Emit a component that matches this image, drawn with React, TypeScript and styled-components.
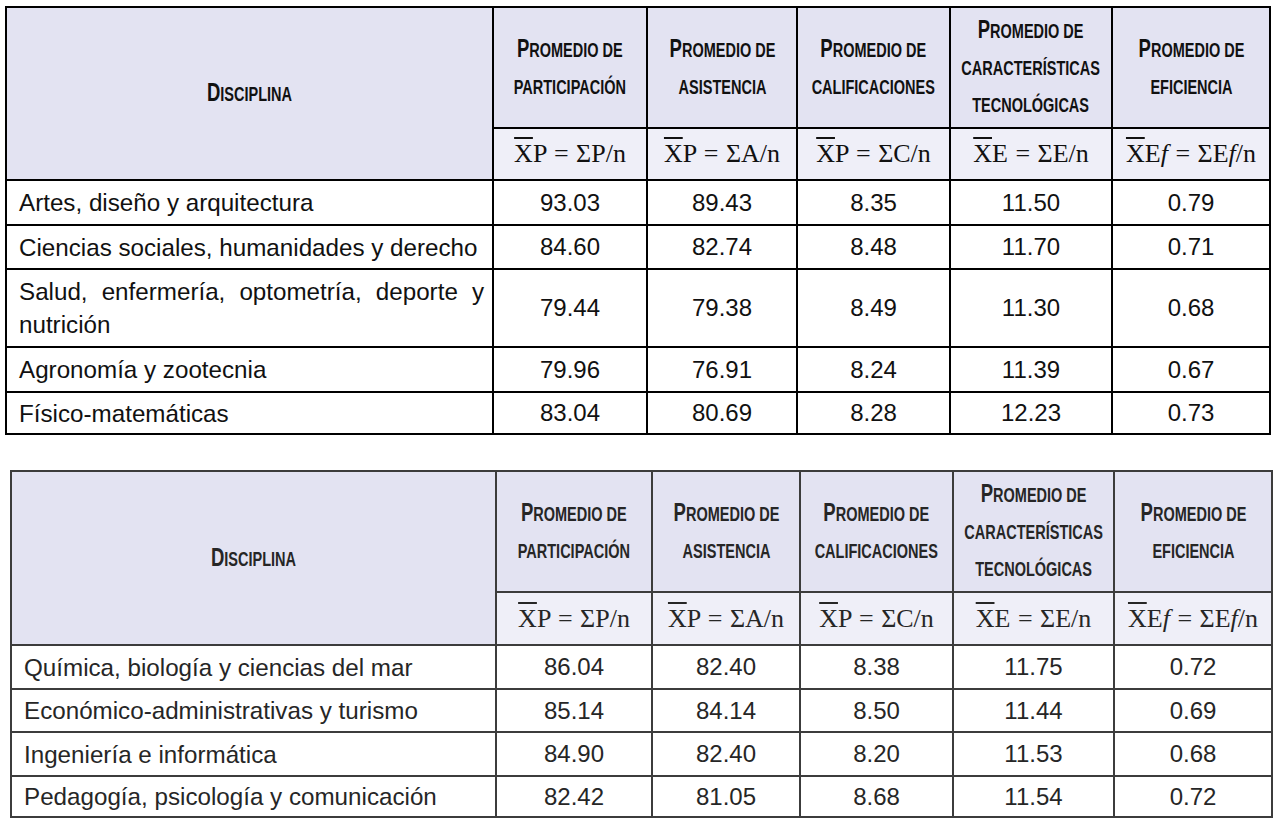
import * as React from 'react';
import styled, { createGlobalStyle } from 'styled-components';

interface Formula {
  lhs: string;
  lhsItalic?: string;
  rhs: string;
  rhsItalic?: string;
}

interface HeadCol {
  lines: string[];
  formula: Formula;
}

interface Row {
  name: string;
  values: string[];
  justify?: boolean;
  height: number;
}

interface TableSpec {
  offset: number;
  line: string;
  ink: string;
  widths: number[];
  headHeight: number;
  formulaHeight: number;
  rows: Row[];
}

const columns: HeadCol[] = [
  { lines: ['romedio de', 'participación'], formula: { lhs: 'P', rhs: 'ΣP/n' } },
  { lines: ['romedio de', 'asistencia'], formula: { lhs: 'P', rhs: 'ΣA/n' } },
  { lines: ['romedio de', 'calificaciones'], formula: { lhs: 'P', rhs: 'ΣC/n' } },
  {
    lines: ['romedio de', 'características', 'tecnológicas'],
    formula: { lhs: 'E', rhs: 'ΣE/n' },
  },
  {
    lines: ['romedio de', 'eficiencia'],
    formula: { lhs: 'E', lhsItalic: 'f', rhs: 'ΣE', rhsItalic: 'f' },
  },
];

const tables: TableSpec[] = [
  {
    offset: 5,
    line: '#000',
    ink: '#111',
    widths: [487, 154, 150, 153, 162, 158],
    headHeight: 121,
    formulaHeight: 52,
    rows: [
      { name: 'Artes, diseño y arquitectura', values: ['93.03', '89.43', '8.35', '11.50', '0.79'], height: 45 },
      { name: 'Ciencias sociales, humanidades y derecho', values: ['84.60', '82.74', '8.48', '11.70', '0.71'], height: 44 },
      {
        name: 'Salud, enfermería, optometría, deporte y nutrición',
        values: ['79.44', '79.38', '8.49', '11.30', '0.68'],
        justify: true,
        height: 78,
      },
      { name: 'Agronomía y zootecnia', values: ['79.96', '76.91', '8.24', '11.39', '0.67'], height: 45 },
      { name: 'Físico-matemáticas', values: ['83.04', '80.69', '8.28', '12.23', '0.73'], height: 42 },
    ],
  },
  {
    offset: 10,
    line: '#3c3c3c',
    ink: '#262626',
    widths: [485, 156, 148, 153, 161, 158],
    headHeight: 121,
    formulaHeight: 53,
    rows: [
      { name: 'Química, biología y ciencias del mar', values: ['86.04', '82.40', '8.38', '11.75', '0.72'], height: 44 },
      { name: 'Económico-administrativas y turismo', values: ['85.14', '84.14', '8.50', '11.44', '0.69'], height: 43 },
      { name: 'Ingeniería e informática', values: ['84.90', '82.40', '8.20', '11.53', '0.68'], height: 44 },
      { name: 'Pedagogía, psicología y comunicación', values: ['82.42', '81.05', '8.68', '11.54', '0.72'], height: 41 },
    ],
  },
];

const GlobalStyle = createGlobalStyle`
  body {
    margin: 0;
    background: #fff;
  }
`;

const Page = styled.main`
  display: flex;
  flex-direction: column;
  align-items: flex-start;
  gap: 35px;
  padding-top: 6px;
`;

const Table = styled.table<{ $offset: number; $width: number; $line: string; $ink: string }>`
  margin-left: ${(p) => p.$offset}px;
  width: ${(p) => p.$width}px;
  border-collapse: collapse;
  table-layout: fixed;
  color: ${(p) => p.$ink};

  th,
  td {
    border: 2px solid ${(p) => p.$line};
    padding: 0;
  }
`;

const Col = styled.col<{ $w: number }>`
  width: ${(p) => p.$w}px;
`;

const HeadRow = styled.tr<{ $h: number }>`
  height: ${(p) => p.$h}px;
`;

const HeadCell = styled.th`
  background: #e3e3f2;
  text-align: center;
  vertical-align: middle;
`;

/* the printed header uses a tall condensed face; squeeze Liberation Sans to match.
   negative side margins keep the unscaled box centred in narrow cells */
const Caption = styled.span`
  display: inline-block;
  margin: 0 -40px;
  transform: scaleX(0.74);
  font-family: 'Liberation Sans', Arial, sans-serif;
  font-weight: bold;
  font-size: 19.6px;
  line-height: 37px;
  text-transform: uppercase;
  white-space: nowrap;
`;

const Initial = styled.span`
  font-size: 25px;
`;

const FormulaCell = styled.th`
  background: #efeff8;
  font-family: 'Liberation Serif', 'DejaVu Serif', serif;
  font-weight: normal;
  font-size: 26px;
  word-spacing: 1px;
  text-align: center;
  vertical-align: middle;
  white-space: nowrap;
  overflow: hidden;
`;

const Bar = styled.span`
  text-decoration: overline;
  text-decoration-thickness: 2px;
`;

const Var = styled.i`
  font-style: italic;
`;

const BodyRow = styled.tr<{ $h: number }>`
  height: ${(p) => p.$h}px;
`;

const NameCell = styled.td<{ $justify?: boolean }>`
  font-family: 'Liberation Sans', Arial, sans-serif;
  font-size: 24.2px;
  line-height: 33px;
  padding: 0 8px 0 12px !important;
  text-align: ${(p) => (p.$justify ? 'justify' : 'left')};
  text-align-last: left;
  vertical-align: middle;
`;

const ValueCell = styled.td`
  font-family: 'Liberation Sans', Arial, sans-serif;
  font-size: 24px;
  text-align: center;
  vertical-align: middle;
`;

const FormulaText: React.FC<{ f: Formula }> = ({ f }) => (
  <>
    <Bar>X</Bar>
    {f.lhs}
    {f.lhsItalic && <Var>{f.lhsItalic}</Var>} = {f.rhs}
    {f.rhsItalic && <Var>{f.rhsItalic}</Var>}
    {f.rhsItalic ? '/n' : ''}
  </>
);

const DataTable: React.FC<{ spec: TableSpec }> = ({ spec }) => (
  <Table
    $offset={spec.offset}
    $width={spec.widths.reduce((a, b) => a + b, 0) + 2}
    $line={spec.line}
    $ink={spec.ink}
  >
    <colgroup>
      {spec.widths.map((w, i) => (
        <Col key={i} $w={w} />
      ))}
    </colgroup>
    <thead>
      <HeadRow $h={spec.headHeight}>
        <HeadCell rowSpan={2}>
          <Caption>
            <Initial>D</Initial>isciplina
          </Caption>
        </HeadCell>
        {columns.map((c, i) => (
          <HeadCell key={i}>
            <Caption>
              <Initial>P</Initial>
              {c.lines.map((l, j) => (
                <React.Fragment key={j}>
                  {j > 0 && <br />}
                  {l}
                </React.Fragment>
              ))}
            </Caption>
          </HeadCell>
        ))}
      </HeadRow>
      <HeadRow $h={spec.formulaHeight}>
        {columns.map((c, i) => (
          <FormulaCell key={i}>
            <FormulaText f={c.formula} />
          </FormulaCell>
        ))}
      </HeadRow>
    </thead>
    <tbody>
      {spec.rows.map((r) => (
        <BodyRow key={r.name} $h={r.height}>
          <NameCell $justify={r.justify}>{r.name}</NameCell>
          {r.values.map((v, i) => (
            <ValueCell key={i}>{v}</ValueCell>
          ))}
        </BodyRow>
      ))}
    </tbody>
  </Table>
);

const App: React.FC = () => (
  <Page>
    <GlobalStyle />
    {tables.map((t, i) => (
      <DataTable key={i} spec={t} />
    ))}
  </Page>
);

export default App;
